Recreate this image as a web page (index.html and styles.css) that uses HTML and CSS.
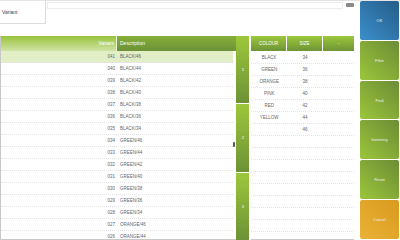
FILE: index.html
```html
<!DOCTYPE html>
<html lang="en">
<head>
    <meta charset="UTF-8">
    <title>Variant</title>
    <link rel="stylesheet" href="styles.css">
</head>
<body>
    <div class="app">
        <div class="main">
            <div class="top">
                <div class="variant-box">Variant</div>
                <div class="search">
                    <div class="search-input"></div>
                    <div class="search-btn"></div>
                </div>
            </div>
            <div class="content">
                <div class="grid">
                    <div class="grid-head">
                        <div class="col-variant">Variant</div>
                        <div class="col-desc">Description</div>
                    </div>
                    <div class="rows">
                        <div class="row selected"><span class="c-variant">041</span><span class="c-desc">BLACK/46</span></div>
                        <div class="row"><span class="c-variant">040</span><span class="c-desc">BLACK/44</span></div>
                        <div class="row"><span class="c-variant">039</span><span class="c-desc">BLACK/42</span></div>
                        <div class="row"><span class="c-variant">038</span><span class="c-desc">BLACK/40</span></div>
                        <div class="row"><span class="c-variant">037</span><span class="c-desc">BLACK/38</span></div>
                        <div class="row"><span class="c-variant">036</span><span class="c-desc">BLACK/36</span></div>
                        <div class="row"><span class="c-variant">035</span><span class="c-desc">BLACK/34</span></div>
                        <div class="row"><span class="c-variant">034</span><span class="c-desc">GREEN/46</span></div>
                        <div class="row"><span class="c-variant">033</span><span class="c-desc">GREEN/44</span></div>
                        <div class="row"><span class="c-variant">032</span><span class="c-desc">GREEN/42</span></div>
                        <div class="row"><span class="c-variant">031</span><span class="c-desc">GREEN/40</span></div>
                        <div class="row"><span class="c-variant">030</span><span class="c-desc">GREEN/38</span></div>
                        <div class="row"><span class="c-variant">029</span><span class="c-desc">GREEN/36</span></div>
                        <div class="row"><span class="c-variant">028</span><span class="c-desc">GREEN/34</span></div>
                        <div class="row"><span class="c-variant">027</span><span class="c-desc">ORANGE/46</span></div>
                        <div class="row"><span class="c-variant">026</span><span class="c-desc">ORANGE/44</span></div>
                    </div>
                    <div class="scroll-mark"></div>
                </div>
                <div class="pager">
                    <div class="page">1</div>
                    <div class="page">2</div>
                    <div class="page">3</div>
                </div>
                <div class="sizes">
                    <div class="sizes-head">
                        <div class="h-cell">COLOUR</div>
                        <div class="h-cell">SIZE</div>
                        <div class="h-cell">-</div>
                    </div>
                    <div class="rows">
                        <div class="srow"><span>BLACK</span><span>34</span><span></span></div>
                        <div class="srow"><span>GREEN</span><span>36</span><span></span></div>
                        <div class="srow"><span>ORANGE</span><span>38</span><span></span></div>
                        <div class="srow"><span>PINK</span><span>40</span><span></span></div>
                        <div class="srow"><span>RED</span><span>42</span><span></span></div>
                        <div class="srow"><span>YELLOW</span><span>44</span><span></span></div>
                        <div class="srow"><span></span><span>46</span><span></span></div>
                        <div class="srow"><span></span><span></span><span></span></div>
                        <div class="srow"><span></span><span></span><span></span></div>
                        <div class="srow"><span></span><span></span><span></span></div>
                        <div class="srow"><span></span><span></span><span></span></div>
                        <div class="srow"><span></span><span></span><span></span></div>
                        <div class="srow"><span></span><span></span><span></span></div>
                        <div class="srow"><span></span><span></span><span></span></div>
                        <div class="srow"><span></span><span></span><span></span></div>
                    </div>
                </div>
            </div>
        </div>
        <div class="buttons">
            <div class="btn blue">OK</div>
            <div class="btn green">Filter</div>
            <div class="btn green">Find</div>
            <div class="btn green">Inventory</div>
            <div class="btn green">Reset</div>
            <div class="btn orange">Cancel</div>
        </div>
    </div>
</body>
</html>
```

FILE: styles.css
```css
body {
    margin: 0;
    font-family: "Liberation Sans", Arial, sans-serif;
    background-color: white;
    color: #666;
}
.app {
    display: flex;
    width: 400px;
    height: 240px;
    overflow: hidden;
    border-top: 1px solid #e4e4e4;
    box-sizing: border-box;
}
.main {
    flex: 1;
    display: flex;
    flex-direction: column;
    min-width: 0;
}
.top {
    height: 35px;
    display: flex;
}
.variant-box {
    width: 46px;
    height: 23px;
    border-right: 1px solid #dcdcdc;
    border-bottom: 1px solid #dcdcdc;
    font-size: 5px;
    line-height: 23px;
    padding-left: 2px;
    box-sizing: border-box;
    color: #444;
}
.search {
    flex: 1;
    display: flex;
    padding: 1px 0 0 1px;
    gap: 3px;
}
.search-input {
    flex: 1;
    height: 5px;
    border: 1px solid #ececec;
}
.search-btn {
    width: 8px;
    height: 4px;
    margin-top: 1px;
    background-color: #8a8a8a;
    border-radius: 1px;
}
.content {
    flex: 1;
    display: flex;
    min-height: 0;
}
.grid {
    position: relative;
    width: 237px;
    border-left: 1px solid #c8c8c8;
    border-bottom: 1px solid #c8c8c8;
    box-sizing: border-box;
}
.grid-head {
    display: flex;
    height: 15px;
    font-size: 5px;
    line-height: 15px;
    color: white;
}
.col-variant {
    width: 116px;
    text-align: right;
    padding-right: 2px;
    box-sizing: border-box;
    background: linear-gradient(#99c33a, #cfe3a6);
    border-right: 1px solid #e8f0d8;
}
.col-desc {
    flex: 1;
    padding-left: 3px;
    background: linear-gradient(#86af3a, #6c9237);
}
.row {
    display: flex;
    height: 12px;
    line-height: 12px;
    font-size: 4.5px;
    border-bottom: 1px dotted #e4e4e4;
    box-sizing: border-box;
    margin-right: 3px;
}
.row.selected {
    background-color: #e2eec6;
}
.c-variant {
    width: 116px;
    text-align: right;
    padding-right: 2px;
    box-sizing: border-box;
}
.c-desc {
    padding-left: 3px;
}
.scroll-mark {
    position: absolute;
    right: 1px;
    top: 106px;
    width: 2px;
    height: 5px;
    background-color: #555;
    border-radius: 1px;
}
.pager {
    width: 13px;
    display: flex;
    flex-direction: column;
    gap: 1px;
    margin-right: 2px;
}
.page {
    flex: 1;
    display: flex;
    align-items: center;
    justify-content: center;
    font-size: 4px;
    color: white;
    background: linear-gradient(#9cc73b, #6d9236);
}
.sizes {
    width: 103px;
    border-bottom: 1px solid #c8c8c8;
    box-sizing: border-box;
}
.sizes-head {
    display: flex;
    gap: 1px;
    height: 15px;
    margin-bottom: 1px;
}
.h-cell {
    flex: 1;
    font-size: 4.5px;
    line-height: 15px;
    text-align: center;
    color: white;
    background: linear-gradient(#9dc73c, #6e9436);
}
.h-cell:last-child {
    flex: 0 0 31px;
}
.srow {
    display: flex;
    height: 12px;
    line-height: 12px;
    font-size: 4.5px;
    text-align: center;
    border-bottom: 1px dotted #e4e4e4;
    box-sizing: border-box;
}
.srow span {
    flex: 1;
}
.srow span:last-child {
    flex: 0 0 31px;
}
.buttons {
    width: 39px;
    display: flex;
    flex-direction: column;
    gap: 1px;
    padding: 0 1px 1px 0;
    margin-left: 6px;
}
.btn {
    flex: 1;
    display: flex;
    align-items: center;
    justify-content: center;
    font-size: 4px;
    color: #f0f0f0;
    border-radius: 2px;
}
.blue {
    background: linear-gradient(to bottom left, #255c88, #3b8fcb);
}
.green {
    background: linear-gradient(to bottom left, #6c8c35, #9cc63b);
}
.orange {
    background: linear-gradient(to bottom left, #d99a1f, #e9b236);
}
```
